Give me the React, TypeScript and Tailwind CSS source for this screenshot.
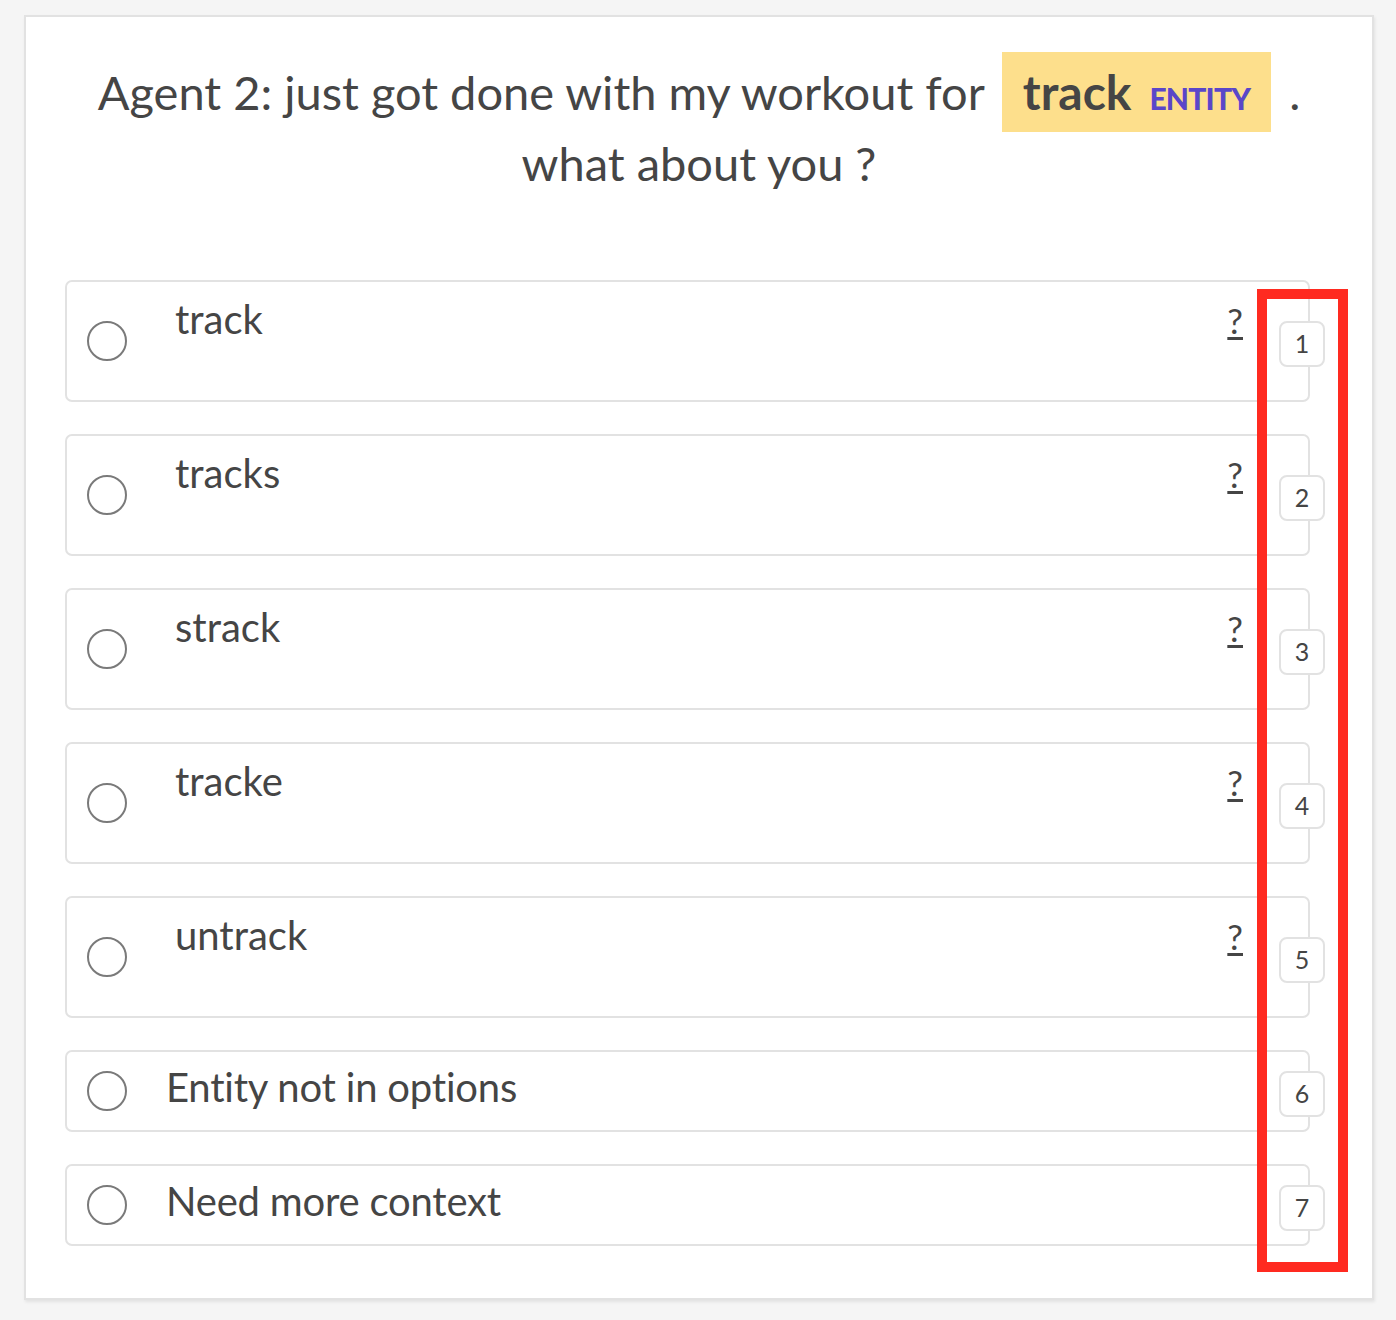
import React from 'react';

const options = [
  { label: 'track', hint: true },
  { label: 'tracks', hint: true },
  { label: 'strack', hint: true },
  { label: 'tracke', hint: true },
  { label: 'untrack', hint: true },
  { label: 'Entity not in options', hint: false },
  { label: 'Need more context', hint: false },
];

function Radio() {
  return <span className="block h-[40px] w-[40px] shrink-0 rounded-full border-2 border-[#7a7a7a] bg-white" />;
}

function OptionRow({ label, hint, index }: { label: string; hint: boolean; index: number }) {
  return (
    <div className="flex items-center">
      {hint ? (
        <div className="flex h-[122px] w-[1245px] items-start rounded-[7px] border-2 border-[#e2e2e2] bg-white pl-[20px] pr-[65px]">
          <div className="flex h-full items-center">
            <Radio />
          </div>
          <div className="ml-[48px] flex flex-1 items-baseline justify-between pt-[13px]">
            <span className="text-[40px] leading-[48px] text-[#454545]">{label}</span>
            <span className="text-[35px] leading-[48px] text-[#454545] underline decoration-[3px] underline-offset-[3px]">
              ?
            </span>
          </div>
        </div>
      ) : (
        <div className="flex h-[82px] w-[1245px] items-start rounded-[7px] border-2 border-[#e2e2e2] bg-white pl-[20px]">
          <div className="flex h-full items-center">
            <Radio />
          </div>
          <span className="ml-[39px] pt-[11px] text-[40px] leading-[48px] tracking-[-0.2px] text-[#454545]">{label}</span>
        </div>
      )}
      <div className="relative z-10 -ml-[31px] mt-[6px] flex h-[46px] w-[46px] items-center justify-center rounded-[8px] border-2 border-[#e2e2e2] bg-white text-[25px] text-[#454545]">
        {index}
      </div>
    </div>
  );
}

export default function App() {
  return (
    <div className="min-h-screen bg-[#f5f5f5] pl-[24px] pt-[15px]" style={{ fontFamily: 'Lato, "Noto Sans", sans-serif' }}>
      <div className="relative h-[1285px] w-[1350px] border-2 border-[#e2e2e2] bg-white shadow-[1px_2px_3px_rgba(0,0,0,0.08)]">
        <p className="pt-[35px] text-center text-[47px] leading-[62px] text-[#454545]">
          Agent 2: just got done with my workout for{' '}
          <span className="mx-[6px] inline-block bg-[#fddf8c] px-[21px] leading-[79px]">
            <span className="text-[48px] font-bold">track</span>
            <span className="ml-[18px] text-[30px] font-black leading-none tracking-[-0.8px] text-[#5a46c9]">ENTITY</span>
          </span>{' '}
          .
          <br />
          what about you ?
        </p>

        <div className="ml-[39px] mt-[86px] flex flex-col gap-[32px]">
          {options.map((o, i) => (
            <OptionRow key={o.label} label={o.label} hint={o.hint} index={i + 1} />
          ))}
        </div>

        <div className="absolute left-[1231px] top-[272px] h-[983px] w-[91px] border-[10px] border-[#ff2a20]" />
      </div>
    </div>
  );
}
